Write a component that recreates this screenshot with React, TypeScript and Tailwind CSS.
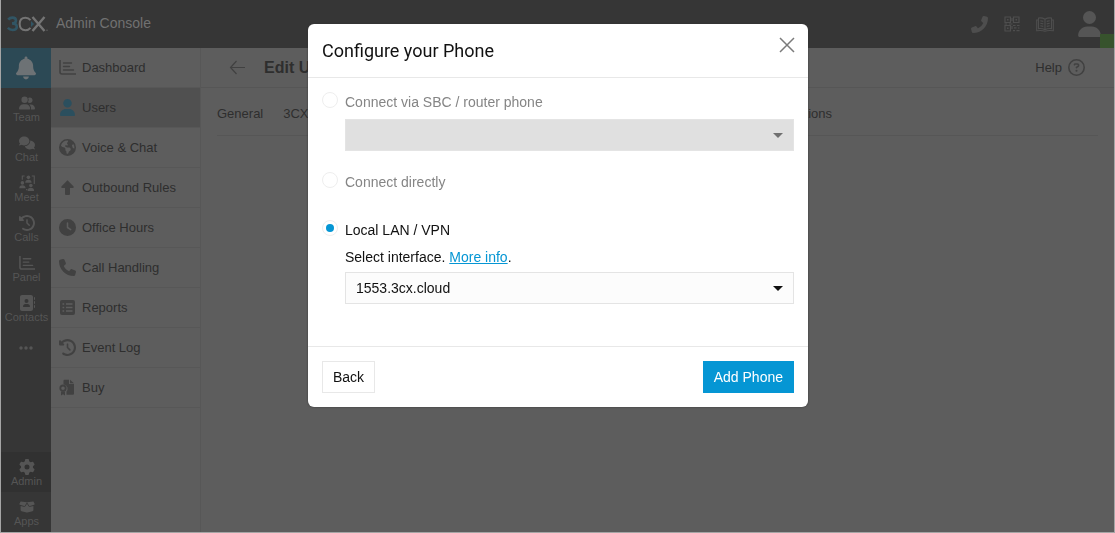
import { useState } from "react";
import type { ReactNode } from "react";
import clsx from "clsx";
import {
  FaAddressBook,
  FaBell,
  FaBoxOpen,
  FaClock,
  FaClockRotateLeft,
  FaComments,
  FaEarthAmericas,
  FaEllipsis,
  FaGear,
  FaPhone,
  FaRegCircleQuestion,
  FaUser,
  FaUserGroup,
} from "react-icons/fa6";

function ChartIcon({ className }: { className?: string }) {
  return (
    <svg viewBox="0 0 17 16" fill="none" stroke="currentColor" className={className}>
      <path d="M1 0.5V12.5Q1 14.5 3 14.5H17" strokeWidth="1.6" />
      <path d="M4.5 3.5H12.5M4.5 7H10.5M4.5 10.5H14.5" strokeWidth="1.4" strokeLinecap="round" />
    </svg>
  );
}

function MeetIcon({ className }: { className?: string }) {
  return (
    <svg viewBox="0 0 17 17" fill="currentColor" className={className}>
      <path d="M6 1H3.5V5M13.5 1H16.2V9.5M7.5 15.5H9" fill="none" stroke="currentColor" strokeWidth="1.2" />
      <circle cx="10" cy="2.5" r="1.9" />
      <path d="M6.6 8.2Q6.6 5 10 5T13.4 8.2Z" />
      <circle cx="3.6" cy="8.4" r="1.9" />
      <path d="M0.3 14Q0.3 10.8 3.6 10.8T7 14Z" />
      <circle cx="12.6" cy="11.2" r="1.9" />
      <path d="M9.2 17Q9.2 13.6 12.6 13.6T16 17Z" />
    </svg>
  );
}

function UpIcon({ className }: { className?: string }) {
  return (
    <svg viewBox="0 0 17 17" fill="currentColor" className={className}>
      <path d="M8.5 1.2 14.6 7.6Q15.2 9 14 9H11V15Q11 16 10 16H7Q6 16 6 15V9H3Q1.8 9 2.4 7.6Z" />
    </svg>
  );
}

function ReportIcon({ className }: { className?: string }) {
  return (
    <svg viewBox="0 0 17 17" className={className}>
      <rect x="1" y="1" width="15" height="15" rx="2" fill="currentColor" />
      <path
        d="M3.5 5H5.2M3.5 8.5H5.2M3.5 12H5.2M7 5H13.5M7 8.5H13.5M7 12H13.5"
        stroke="#5d5d5d"
        strokeWidth="1.4"
      />
    </svg>
  );
}

function BuyIcon({ className }: { className?: string }) {
  return (
    <svg viewBox="0 0 17 17" fill="currentColor" className={className}>
      <path d="M4.5 1.8Q4.5 0.8 5.5 0.8H10V5H15V14.8Q15 15.8 14 15.8H7.5V12.5Q9 11 8.5 8.5 7.5 5.5 4.5 5.2Z" />
      <path d="M11 0.8 15 4.2H11Z" />
      <circle cx="4" cy="9.2" r="2.7" fill="none" stroke="currentColor" strokeWidth="1.8" />
      <path d="M2 12.4H6V16.5L4 15.2 2 16.5Z" />
    </svg>
  );
}

function QrIcon({ className }: { className?: string }) {
  return (
    <svg viewBox="0 0 16 16" fill="none" stroke="currentColor" className={className}>
      <path d="M1 1H6.5V6.5H1ZM9.5 1H15V6.5H9.5ZM1 9.5H6.5V15H1Z" strokeWidth="1.2" />
      <path d="M3 3.8H4.6M11.5 3.8H13.1M3 12.2H4.6" strokeWidth="1.6" />
      <path d="M9 9.5H11.5M13 9.5H15.5M10 11.8H12.5M14 12H15.5M9 14.6H11M12.5 14.6H15.5M0.5 8H3M5 8H8.5M8 2V5M8 10V13" strokeWidth="1.2" />
    </svg>
  );
}

function BookIcon({ className }: { className?: string }) {
  return (
    <svg viewBox="0 0 18 15" fill="none" stroke="currentColor" strokeWidth="1.1" className={className}>
      <path d="M9 2.2Q6.5 0.6 2.5 1V11.6Q6.5 11.2 9 12.8 11.5 11.2 15.5 11.6V1Q11.5 0.6 9 2.2ZM9 2.2V12.8" />
      <path d="M2.5 3H0.7V13.7Q6 13 9 14.2 12 13 17.3 13.7V3H15.5" />
      <path d="M4.3 3.7 7.3 4.4M4.3 6.2 7.3 6.9M4.3 8.7 7.3 9.4M13.7 3.7 10.7 4.4M13.7 6.2 10.7 6.9M13.7 8.7 10.7 9.4" />
    </svg>
  );
}

function Logo() {
  return (
    <span role="img" aria-label="3CX" className="flex items-center">
      <svg viewBox="0 0 41 16" fill="none" className="h-4 w-[41px]">
        <path
          d="M1.2 3.6Q2.8 1.6 5.4 1.6 9 1.6 9 4.6 9 7.4 5 7.4 9.8 7.4 9.8 10.8 9.8 14 5.6 14 2.6 14 0.8 11.8"
          stroke="#315564"
          strokeWidth="2.6"
        />
        <path d="M23.5 4.2Q21.5 1.8 18.5 1.8 12.7 1.8 12.7 8T18.5 14.2Q21.5 14.2 23.5 11.8" stroke="#747474" strokeWidth="2" />
        <path d="M25.5 1 37.5 15M37.5 1 25.5 15" stroke="#747474" strokeWidth="2.4" />
        <path d="M24 5 27 8 24 11Z" fill="#315564" />
        <circle cx="40" cy="14.2" r="0.7" fill="#646464" />
      </svg>
    </span>
  );
}

const railItems = [
  { label: "Team", icon: <FaUserGroup className="size-4" /> },
  { label: "Chat", icon: <FaComments className="size-4" /> },
  { label: "Meet", icon: <MeetIcon className="size-4" /> },
  { label: "Calls", icon: <FaClockRotateLeft className="size-4" /> },
  { label: "Panel", icon: <ChartIcon className="size-4" /> },
  { label: "Contacts", icon: <FaAddressBook className="size-4" /> },
];

const menuItems = [
  { label: "Dashboard", icon: <ChartIcon className="size-[17px]" /> },
  { label: "Users", icon: <FaUser className="size-[17px] text-[#2b4f5e]" />, active: true },
  { label: "Voice & Chat", icon: <FaEarthAmericas className="size-[17px]" /> },
  { label: "Outbound Rules", icon: <UpIcon className="size-[17px]" /> },
  { label: "Office Hours", icon: <FaClock className="size-[17px]" /> },
  { label: "Call Handling", icon: <FaPhone className="size-[17px]" /> },
  { label: "Reports", icon: <ReportIcon className="size-[17px]" /> },
  { label: "Event Log", icon: <FaClockRotateLeft className="size-[17px]" /> },
  { label: "Buy", icon: <BuyIcon className="size-[17px]" /> },
];

function RailItem({ label, icon }: { label: string; icon: ReactNode }) {
  return (
    <a href="#" className="flex h-10 flex-col items-center pt-[7px] pl-px text-[#555555]">
      {icon}
      <span className="text-[11px] leading-3">{label}</span>
    </a>
  );
}

function Header() {
  return (
    <header className="flex h-12 shrink-0 items-center bg-[#363636] pl-1.5">
      <Logo />
      <span className="ml-2 flex-1 pb-0.5 text-sm text-[#717171]">Admin Console</span>
      <div className="flex h-full items-center text-[#4e4e4e]">
        <button aria-label="Dialer" className="mr-4">
          <FaPhone className="size-[17px] -scale-x-100" />
        </button>
        <button aria-label="QR code" className="mr-4">
          <QrIcon className="size-4" />
        </button>
        <button aria-label="Phonebook" className="mr-6">
          <BookIcon className="h-[15px] w-[18px]" />
        </button>
        <button aria-label="Profile" className="relative flex h-full w-9 items-center text-[#555555]">
          <FaUser className="h-[26px] w-[23px]" />
          <span className="absolute right-0 bottom-0 size-3.5 bg-[#37532d]" />
        </button>
      </div>
    </header>
  );
}

function Radio({
  id,
  label,
  checked,
  disabled,
  onChange,
}: {
  id: string;
  label: string;
  checked?: boolean;
  disabled?: boolean;
  onChange?: () => void;
}) {
  return (
    <div className="flex h-5 items-start gap-[7px]">
      <input
        id={id}
        type="radio"
        name="connection"
        checked={!!checked}
        disabled={disabled}
        onChange={onChange}
        className="grid size-4 appearance-none place-items-center rounded-full border border-[#eeeeee] bg-white before:size-2 before:rounded-full checked:before:bg-[#0596d4]"
      />
      <label htmlFor={id} className={clsx("leading-5", disabled && "text-[#858585]")}>
        {label}
      </label>
    </div>
  );
}

function SelectBox({
  label,
  options,
  disabled,
}: {
  label: string;
  options: string[];
  disabled?: boolean;
}) {
  return (
    <div className="relative ml-[23px]">
      <select
        aria-label={label}
        disabled={disabled}
        className={clsx(
          "block h-8 w-full appearance-none border border-[#e4e4e4] px-2.5 text-sm",
          disabled ? "bg-[#e0e0e0] opacity-100" : "bg-[#fcfcfc]",
        )}
      >
        {options.map((o) => (
          <option key={o}>{o}</option>
        ))}
      </select>
      <svg
        viewBox="0 0 10 5"
        className={clsx(
          "pointer-events-none absolute top-3.5 right-[11px] h-[5px] w-2.5",
          disabled ? "fill-[#707070]" : "fill-[#111111]",
        )}
      >
        <path d="M0 0H10L5 5Z" />
      </svg>
    </div>
  );
}

function PhoneDialog() {
  const [mode, setMode] = useState("lan");
  return (
    <div className="fixed inset-0 flex items-start justify-center overflow-auto pt-6 pl-px">
      <div
        role="dialog"
        aria-labelledby="dialog-title"
        className="w-full max-w-[500px] rounded-md bg-white text-sm text-[#111111] shadow-[0_0_2px_#333333]"
      >
        <div className="flex items-start justify-between border-b border-[#e8e8e8] py-[13px] pr-[13px] pl-3.5">
          <h2 id="dialog-title" className="font-[Roboto,sans-serif] text-lg leading-[27px]">
            Configure your Phone
          </h2>
          <button aria-label="Close" className="text-[#7b7b7b]">
            <svg viewBox="0 0 16 16" stroke="currentColor" strokeWidth="1.5" className="size-4">
              <path d="M1 1 15 15M15 1 1 15" />
            </svg>
          </button>
        </div>
        <div className="px-3.5 pt-3.5 pb-[42px]">
          <Radio id="sbc" label="Connect via SBC / router phone" disabled />
          <div className="mt-[7px] mb-[21px]">
            <SelectBox label="Router phone" options={[""]} disabled />
          </div>
          <Radio id="direct" label="Connect directly" disabled />
          <div className="mt-7">
            <Radio id="lan" label="Local LAN / VPN" checked={mode === "lan"} onChange={() => setMode("lan")} />
          </div>
          <p className="mt-[7px] mb-[5px] ml-[23px] leading-5">
            Select interface.{" "}
            <a href="#" className="text-[#0596d4] underline">
              More info
            </a>
            .
          </p>
          <SelectBox label="Interface" options={["1553.3cx.cloud"]} />
        </div>
        <div className="flex justify-between border-t border-[#e8e8e8] p-3.5">
          <button className="h-8 border border-[#e8e8e8] px-2.5">Back</button>
          <button className="h-8 border border-[#0596d4] bg-[#0596d4] px-2.5 text-white">Add Phone</button>
        </div>
      </div>
    </div>
  );
}

export default function App() {
  return (
    <div className="flex min-h-screen flex-col border-r border-b border-l border-[#a5a5a5] bg-[#5d5d5d] font-['Liberation_Sans',Arial,sans-serif] text-[#2e2e2e]">
      <Header />
      <div className="flex flex-1">
        <nav className="flex w-[50px] shrink-0 flex-col bg-[#363636]">
          <a href="#" aria-label="Notifications" className="grid h-10 place-items-center bg-[#2c4955] text-[#6d7275]">
            <FaBell className="h-6 w-5" />
          </a>
          {railItems.map((item) => (
            <RailItem key={item.label} {...item} />
          ))}
          <button aria-label="More" className="grid h-10 place-items-center text-[#555555]">
            <FaEllipsis className="size-4" />
          </button>
          <div className="mt-auto">
            <div className="bg-[#313131]">
              <RailItem label="Admin" icon={<FaGear className="size-4" />} />
            </div>
            <RailItem label="Apps" icon={<FaBoxOpen className="size-4" />} />
          </div>
        </nav>
        <aside className="w-[150px] shrink-0 border-r border-[#575757] text-[13px]">
          {menuItems.map((item) => (
            <a
              key={item.label}
              href="#"
              className={clsx(
                "flex h-10 items-center gap-1.5 border-b border-[#575757] pl-2",
                item.active && "bg-[#505050]",
              )}
            >
              <span className="text-[#414141]">{item.icon}</span>
              {item.label}
            </a>
          ))}
        </aside>
        <main className="min-w-0 flex-1">
          <div className="flex h-10 items-center border-b border-[#565656] pr-[29px] pl-7">
            <button aria-label="Back to users" className="mr-[18px] text-[#414141]">
              <svg viewBox="0 0 17 16" fill="none" stroke="currentColor" strokeWidth="1.2" className="size-[17px]">
                <path d="M7.5 1.5 1.5 8 7.5 14.5M1.5 8H16" />
              </svg>
            </button>
            <h1 className="flex-1 text-base font-bold">Edit User</h1>
            <a href="#" className="flex items-center gap-1.5 text-[13px]">
              Help
              <FaRegCircleQuestion className="size-[17px] text-[#414141]" />
            </a>
          </div>
          <div className="mr-4 ml-4 flex h-12 items-center gap-5 border-b border-[#565656] pt-1 text-[13px]">
            <a href="#">General</a>
            <a href="#" className="flex-1">
              3CX
            </a>
            <a href="#" className="mr-[266px]">
              Options
            </a>
          </div>
        </main>
      </div>
      <PhoneDialog />
    </div>
  );
}
